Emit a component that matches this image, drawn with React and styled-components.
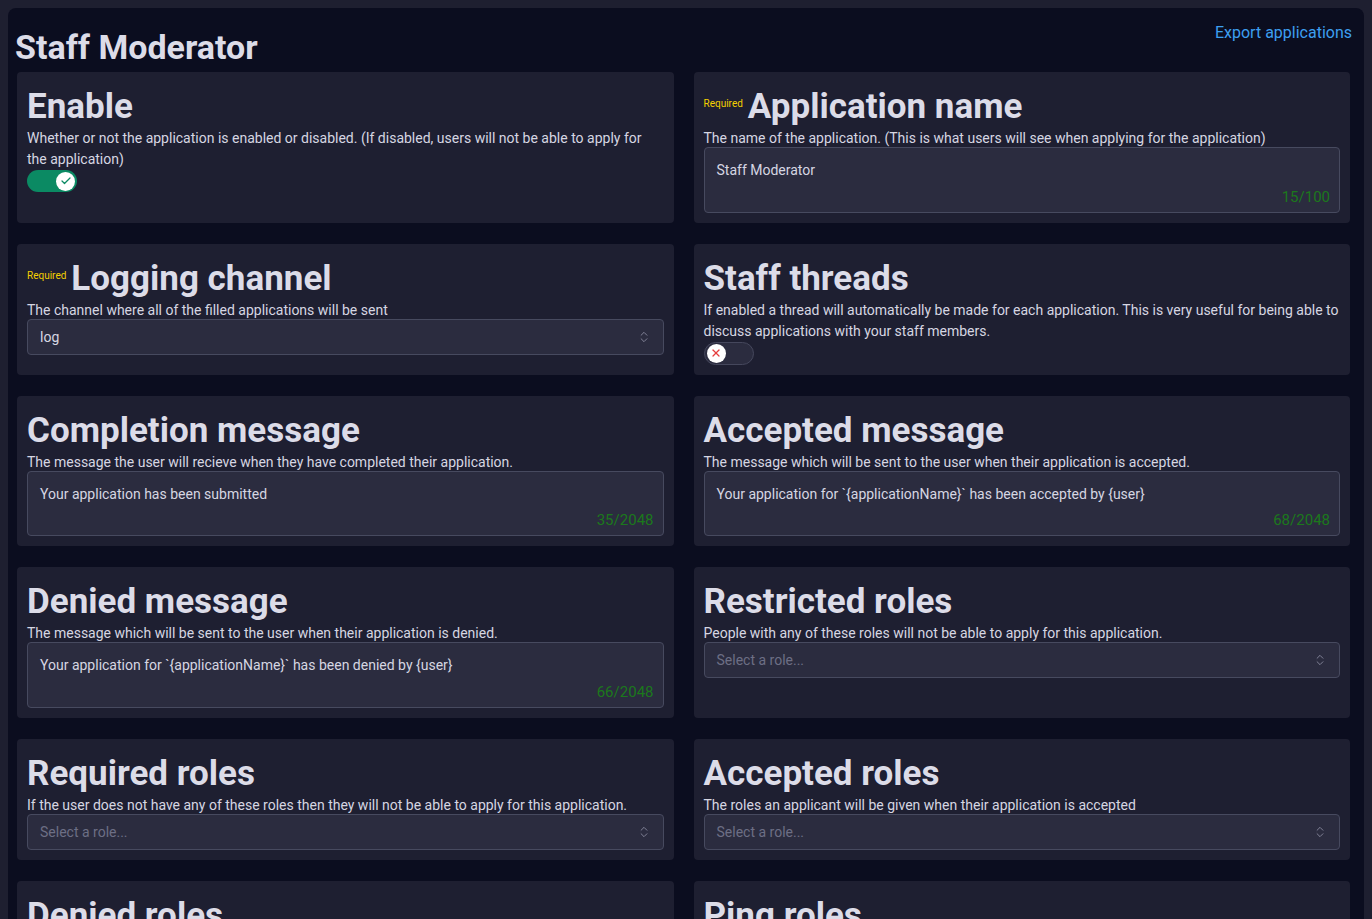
import React from "react";
import styled, { createGlobalStyle } from "styled-components";
import { Check, X, ChevronsUpDown } from "lucide-react";

const Global = createGlobalStyle`
  html, body { margin: 0; padding: 0; }
  body {
    margin: 8px;
    background: #1e1f30;
    font-family: Roboto, "Noto Sans", "Liberation Sans", sans-serif;
    color: #dcdce8;
  }
  * { box-sizing: border-box; }
`;

const Panel = styled.div`
  background: #0b0d1f;
  border-radius: 8px;
  padding: 12px 12px 40px 7px;
  min-height: 920px;
`;

const Header = styled.div`
  display: flex;
  justify-content: space-between;
  align-items: flex-start;
`;

const Title = styled.h1`
  margin: 7px 0 0 0;
  font-size: 34px;
  line-height: 40px;
  font-weight: 700;
  color: #dcdce8;
`;

const ExportLink = styled.a`
  color: #3d9ff0;
  font-size: 16px;
  line-height: 24px;
  margin-top: 1px;
  text-decoration: none;
  cursor: pointer;
`;

const Grid = styled.div`
  display: grid;
  grid-template-columns: 1fr 1fr;
  column-gap: 20px;
  row-gap: 21px;
  margin: 5px 2px 0 2px;
`;

const Card = styled.section`
  background: #1e1f31;
  border-radius: 4px;
  padding: 10px;
  display: flex;
  flex-direction: column;
  align-items: stretch;
`;

const HeadingRow = styled.div`
  display: flex;
  align-items: flex-end;
  gap: 5px;
  height: 44px;
`;

const RequiredTag = styled.span`
  align-self: flex-start;
  margin-top: 16px;
  color: #f4d000;
  font-size: 10px;
  line-height: 12px;
`;

const Heading = styled.h2`
  margin: 0;
  font-size: 35px;
  line-height: 38px;
  font-weight: 700;
  color: #dcdce8;
  white-space: nowrap;
`;

const Description = styled.p`
  margin: 0 0 -2px 0;
  padding-top: 2px;
  font-size: 14px;
  line-height: 21px;
  color: #d6d6e2;
`;

const TextBox = styled.div`
  position: relative;
  background: #2b2c3f;
  border: 1px solid #474a5f;
  border-radius: 4px;
  height: 65.5px;
  padding: 12px 12px;
  font-size: 14px;
  line-height: 20px;
  color: #d6d6e2;
`;

const Counter = styled.span`
  position: absolute;
  right: 9px;
  bottom: 5px;
  font-size: 15px;
  line-height: 20px;
  color: #1c781c;
`;

const SelectBox = styled.div`
  display: flex;
  align-items: center;
  justify-content: space-between;
  background: #2b2c3f;
  border: 1px solid #474a5f;
  border-radius: 4px;
  height: 36px;
  padding: 0 12px;
  font-size: 14px;
  color: ${(p) => (p.$placeholder ? "#6d6f85" : "#d6d6e2")};
  svg { color: #8b8da1; }
`;

const Toggle = styled.button`
  position: relative;
  display: flex;
  align-items: center;
  justify-content: ${(p) => (p.$on ? "flex-end" : "flex-start")};
  width: 50px;
  height: ${(p) => (p.$on ? "22px" : "23px")};
  border-radius: 999px;
  padding: 0 2px;
  margin-top: 2px;
  border: ${(p) => (p.$on ? "none" : "1px solid #45475c")};
  background: ${(p) => (p.$on ? "#0b8a63" : "#2b2c3f")};
  cursor: pointer;
`;

const Knob = styled.span`
  width: 19px;
  height: 19px;
  border-radius: 50%;
  background: #ffffff;
  display: flex;
  align-items: center;
  justify-content: center;
  color: ${(p) => (p.$on ? "#0b8a63" : "#e53e3e")};
`;

function Field({ title, required, desc, children }) {
  return (
    <Card>
      <HeadingRow>
        {required && <RequiredTag>Required</RequiredTag>}
        <Heading>{title}</Heading>
      </HeadingRow>
      <Description>{desc}</Description>
      {children}
    </Card>
  );
}

function Switch({ on }) {
  return (
    <div>
      <Toggle $on={on}>
        <Knob $on={on}>
          {on ? <Check size={12} strokeWidth={2.5} /> : <X size={12} strokeWidth={2.5} />}
        </Knob>
      </Toggle>
    </div>
  );
}

function Text({ value, max }) {
  return (
    <TextBox>
      {value}
      <Counter>
        {value.length}/{max}
      </Counter>
    </TextBox>
  );
}

function Select({ value, placeholder }) {
  return (
    <SelectBox $placeholder={!value}>
      <span>{value || placeholder}</span>
      <ChevronsUpDown size={14} strokeWidth={1.5} />
    </SelectBox>
  );
}

export default function App() {
  return (
    <>
      <Global />
      <Panel>
        <Header>
          <Title>Staff Moderator</Title>
          <ExportLink>Export applications</ExportLink>
        </Header>
        <Grid>
          <Field
            title="Enable"
            desc="Whether or not the application is enabled or disabled. (If disabled, users will not be able to apply for the application)"
          >
            <Switch on />
          </Field>
          <Field
            title="Application name"
            required
            desc="The name of the application. (This is what users will see when applying for the application)"
          >
            <Text value="Staff Moderator" max={100} />
          </Field>
          <Field
            title="Logging channel"
            required
            desc="The channel where all of the filled applications will be sent"
          >
            <Select value="log" />
          </Field>
          <Field
            title="Staff threads"
            desc="If enabled a thread will automatically be made for each application. This is very useful for being able to discuss applications with your staff members."
          >
            <Switch on={false} />
          </Field>
          <Field
            title="Completion message"
            desc="The message the user will recieve when they have completed their application."
          >
            <Text value="Your application has been submitted" max={2048} />
          </Field>
          <Field
            title="Accepted message"
            desc="The message which will be sent to the user when their application is accepted."
          >
            <Text value="Your application for `{applicationName}` has been accepted by {user}" max={2048} />
          </Field>
          <Field
            title="Denied message"
            desc="The message which will be sent to the user when their application is denied."
          >
            <Text value="Your application for `{applicationName}` has been denied by {user}" max={2048} />
          </Field>
          <Field
            title="Restricted roles"
            desc="People with any of these roles will not be able to apply for this application."
          >
            <Select placeholder="Select a role..." />
          </Field>
          <Field
            title="Required roles"
            desc="If the user does not have any of these roles then they will not be able to apply for this application."
          >
            <Select placeholder="Select a role..." />
          </Field>
          <Field
            title="Accepted roles"
            desc="The roles an applicant will be given when their application is accepted"
          >
            <Select placeholder="Select a role..." />
          </Field>
          <Field
            title="Denied roles"
            desc="The roles an applicant will be given when their application is denied"
          >
            <Select placeholder="Select a role..." />
          </Field>
          <Field
            title="Ping roles"
            desc="The roles that will be pinged when a new application is submitted"
          >
            <Select placeholder="Select a role..." />
          </Field>
        </Grid>
      </Panel>
    </>
  );
}
